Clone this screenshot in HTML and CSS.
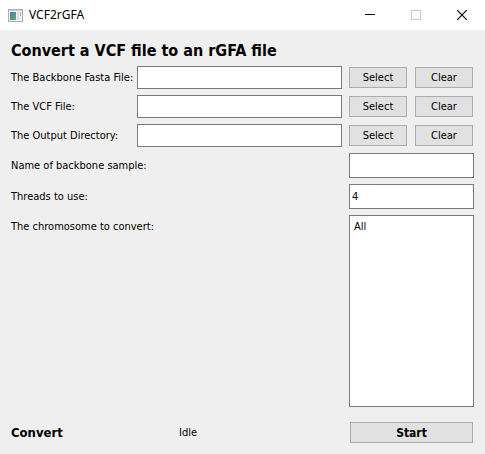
FILE: index.html
```html
<!DOCTYPE html>
<html lang="en">
<head>
<meta charset="utf-8">
<title>VCF2rGFA</title>
<link rel="stylesheet" href="styles.css">
</head>
<body>
<header class="titlebar">
  <svg class="app-icon" width="15" height="13" viewBox="0 0 15 13" aria-hidden="true">
    <defs>
      <linearGradient id="pane" x1="0" y1="0" x2="1" y2="1">
        <stop offset="0" stop-color="#4a7f9c"/>
        <stop offset="1" stop-color="#5fae83"/>
      </linearGradient>
    </defs>
    <rect x=".5" y=".5" width="14" height="12" fill="#f1f3f4" stroke="#a9b1b6"/>
    <rect x="1" y="1" width="13" height="1" fill="#c9d2d8"/>
    <rect x="2" y="3" width="6" height="8" fill="url(#pane)"/>
    <rect x="9" y="3" width="2" height="8" fill="#d5dfe2"/>
    <rect x="12" y="3" width="1" height="4" fill="#9fb5bd"/>
  </svg>
  <span class="app-name">VCF2rGFA</span>
  <div class="window-buttons">
    <button type="button" class="window-button" aria-label="Minimize">
      <svg width="10" height="10" viewBox="0 0 10 10"><path d="M0 4.5h10" stroke="#000"/></svg>
    </button>
    <button type="button" class="window-button" aria-label="Maximize" disabled>
      <svg width="10" height="10" viewBox="0 0 10 10"><rect x=".5" y=".5" width="9" height="9" fill="none" stroke="#c8c8c8"/></svg>
    </button>
    <button type="button" class="window-button" aria-label="Close">
      <svg width="10" height="10" viewBox="0 0 10 10"><path d="M0 0l10 10M10 0L0 10" stroke="#000" stroke-width="1.2"/></svg>
    </button>
  </div>
</header>
<main class="content">
  <h1 class="heading">Convert a VCF file to an rGFA file</h1>
  <form class="form">
    <div class="row">
      <label class="path-label" for="fasta">The Backbone Fasta File:</label>
      <input class="field path" id="fasta" type="text">
      <div class="actions">
        <button type="button" class="button">Select</button>
        <button type="button" class="button">Clear</button>
      </div>
    </div>
    <div class="row">
      <label class="path-label" for="vcf">The VCF File:</label>
      <input class="field path" id="vcf" type="text">
      <div class="actions">
        <button type="button" class="button">Select</button>
        <button type="button" class="button">Clear</button>
      </div>
    </div>
    <div class="row">
      <label class="path-label" for="output">The Output Directory:</label>
      <input class="field path" id="output" type="text">
      <div class="actions">
        <button type="button" class="button">Select</button>
        <button type="button" class="button">Clear</button>
      </div>
    </div>
    <div class="row">
      <label class="option-label" for="sample">Name of backbone sample:</label>
      <input class="field option" id="sample" type="text">
    </div>
    <div class="row">
      <label class="option-label" for="threads">Threads to use:</label>
      <input class="field option" id="threads" type="text" value="4">
    </div>
    <div class="row row-list">
      <label class="option-label" for="chromosome">The chromosome to convert:</label>
      <select class="field list" id="chromosome" size="4">
        <option>All</option>
      </select>
    </div>
    <div class="row footer">
      <strong class="stage">Convert</strong>
      <output class="status">Idle</output>
      <button type="button" class="button start">Start</button>
    </div>
  </form>
</main>
</body>
</html>
```
FILE: styles.css
```css
* {
  box-sizing: border-box;
}

body {
  display: flex;
  flex-direction: column;
  min-height: 100vh;
  margin: 0;
  background: #efefef;
  color: #000;
  font: 11px/14px "DejaVu Sans Condensed", Tahoma, sans-serif;
}

button,
input,
select {
  margin: 0;
  color: inherit;
  font: inherit;
}

.titlebar {
  display: flex;
  align-items: center;
  height: 30px;
  padding-left: 8px;
  background: #fff;
}

.app-name {
  margin-left: 6px;
  font: 12px/16px "Noto Sans", sans-serif;
}

.window-buttons {
  display: flex;
  margin-left: auto;
}

.window-button {
  display: flex;
  align-items: center;
  justify-content: center;
  width: 46px;
  height: 28px;
  padding: 0;
  border: 0;
  background: none;
}

.content {
  display: flex;
  flex: 1;
  flex-direction: column;
  padding: 11px;
}

.heading {
  margin: 0 0 5px;
  font-size: 16px;
  line-height: 20px;
}

.form {
  display: flex;
  flex: 1;
  flex-direction: column;
  gap: 6px;
}

.row {
  display: flex;
  align-items: center;
}

.path-label {
  width: 126px;
  white-space: nowrap;
}

.option-label {
  flex: 1;
}

.field {
  border: 1px solid #7a7a7a;
  border-radius: 0;
  background: #fff;
  outline: 0;
}

.path {
  flex: 1;
  min-width: 0;
  height: 23px;
  padding: 0 2px;
}

.option {
  width: 125px;
  height: 25px;
  padding: 0 2px;
}

.actions {
  display: flex;
  gap: 8px;
  width: 125px;
  margin-left: 7px;
}

.button {
  width: 58px;
  height: 21px;
  padding: 0;
  border: 1px solid #adadad;
  background: #e1e1e1;
}

.row-list {
  flex: 1;
  align-items: stretch;
}

.row-list .option-label {
  padding-top: 5px;
}

.list {
  width: 125px;
  padding: 4px;
}

.list option {
  padding: 0;
}

.footer {
  margin-top: 9px;
}

.stage {
  width: 168px;
  font-size: 13px;
}

.start {
  width: 123px;
  margin: 0 1px 0 auto;
  font-size: 12px;
  font-weight: bold;
}
```
